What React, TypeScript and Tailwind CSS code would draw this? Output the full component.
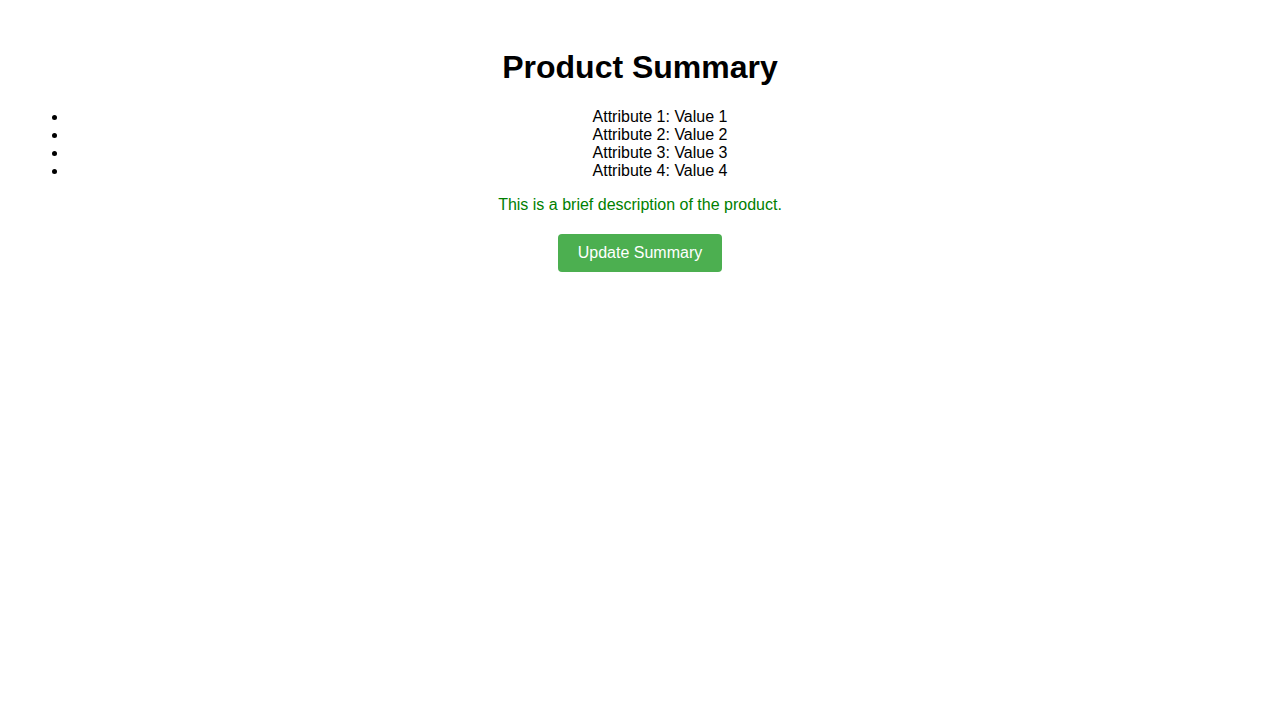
import React from "react";

const attributes = [
  { name: "Attribute 1", value: "Value 1" },
  { name: "Attribute 2", value: "Value 2" },
  { name: "Attribute 3", value: "Value 3" },
  { name: "Attribute 4", value: "Value 4" },
];

export default function App() {
  return (
    <div
      className="min-h-screen bg-white p-2 text-center text-black"
      style={{ fontFamily: '"Liberation Sans", Arial, sans-serif' }}
    >
      <div className="p-5">
        <h1 className="my-[21.44px] text-[32px] font-bold leading-[normal]">
          Product Summary
        </h1>
        <ul className="mb-4 list-disc pl-10 text-base leading-[normal]">
          {attributes.map((attr) => (
            <li key={attr.name}>
              {attr.name}: {attr.value}
            </li>
          ))}
        </ul>
        <p className="my-4 text-base leading-[normal] text-[#008000]">
          This is a brief description of the product.
        </p>
        <button className="mt-1 cursor-pointer rounded bg-[#4CAF50] px-5 py-2.5 text-base leading-[normal] text-white">
          Update Summary
        </button>
      </div>
    </div>
  );
}
